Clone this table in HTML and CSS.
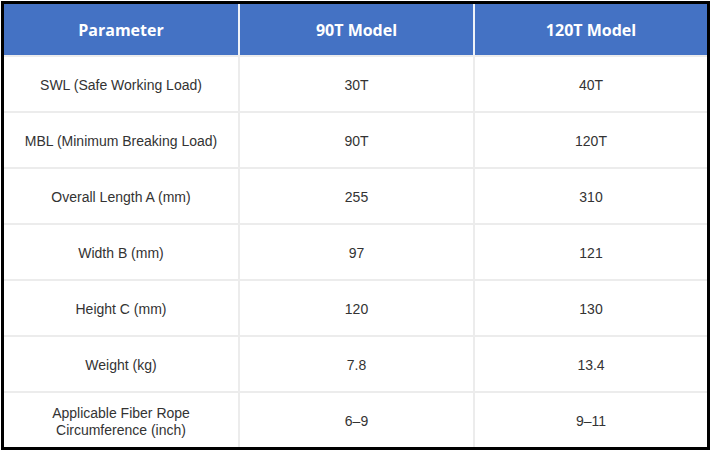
FILE: index.html
```html
<!DOCTYPE html>
<html>
<head>
<meta charset="utf-8">
<link rel="stylesheet" href="styles.css">
</head>
<body>
<div class="frame">
  <div class="grid">
    <div class="hd hd-sep">Parameter</div>
    <div class="hd hd-sep">90T Model</div>
    <div class="hd">120T Model</div>

    <div class="cell">SWL (Safe Working Load)</div>
    <div class="cell">30T</div>
    <div class="cell">40T</div>

    <div class="cell">MBL (Minimum Breaking Load)</div>
    <div class="cell">90T</div>
    <div class="cell">120T</div>

    <div class="cell">Overall Length A (mm)</div>
    <div class="cell">255</div>
    <div class="cell">310</div>

    <div class="cell">Width B (mm)</div>
    <div class="cell">97</div>
    <div class="cell">121</div>

    <div class="cell">Height C (mm)</div>
    <div class="cell">120</div>
    <div class="cell">130</div>

    <div class="cell">Weight (kg)</div>
    <div class="cell">7.8</div>
    <div class="cell">13.4</div>

    <div class="cell">Applicable Fiber Rope<br>Circumference (inch)</div>
    <div class="cell">6–9</div>
    <div class="cell">9–11</div>
  </div>
</div>
</body>
</html>
```

FILE: styles.css
```css
html, body {
  margin: 0;
  padding: 0;
  background: #ffffff;
}
.frame {
  margin: 1px 0 0 1px;
  width: 703px;
  border: 3px solid #000;
  background: #ffffff;
}
.grid {
  display: grid;
  grid-template-columns: 234px 233px 232px;
  grid-template-rows: 51px repeat(7, 54px);
  gap: 2px;
  background: #ececec;
}
.hd {
  background: #4472c4;
  color: #ffffff;
  font-family: "Open Sans", "Liberation Sans", sans-serif;
  font-weight: 700;
  font-size: 16px;
  display: flex;
  align-items: center;
  justify-content: center;
  padding-top: 1px;
}
.hd-sep {
  box-shadow: 2px 0 0 #eef2f8;
}
.cell {
  background: #ffffff;
  color: #333333;
  font-family: "Liberation Sans", Arial, sans-serif;
  font-size: 14px;
  line-height: 17px;
  display: flex;
  align-items: center;
  justify-content: center;
  text-align: center;
  padding-top: 3px;
}
```
